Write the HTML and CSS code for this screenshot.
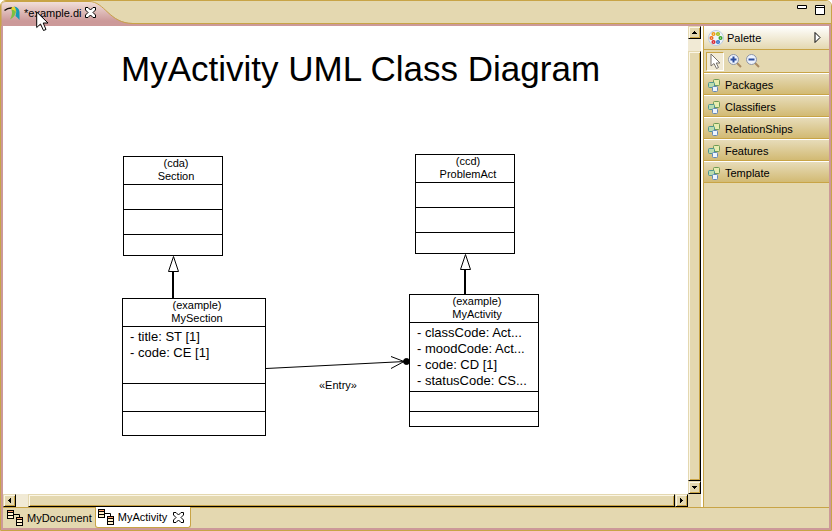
FILE: index.html
```html
<!DOCTYPE html>
<html lang="en">
<head>
<meta charset="utf-8">
<title>example.di</title>
<link rel="stylesheet" href="styles.css">
</head>
<body>
<svg class="defs" aria-hidden="true">
  <defs>
    <linearGradient id="tabfill" x1="0" y1="0" x2="0" y2="1"><stop offset="0" stop-color="#f3e2dc"/><stop offset=".8" stop-color="#cc9999"/></linearGradient>
    <symbol id="close" viewBox="0 0 11 11"><path d="M.5.5H3L5.500 3 8 .5h2.500V3L8 5.500l2.500 2.500v2.500H8L5.500 8 3 10.500H.5V8L3 5.500.5 3z" fill="#fff" stroke="#000"/></symbol>
    <symbol id="drawer" viewBox="0 0 12 13"><rect x="5.500" y=".5" width="6" height="6" rx="1" fill="#e8ecae" stroke="#6f9a55"/><rect x=".5" y="3.500" width="6" height="5" rx="1" fill="#b9dcae" stroke="#4f9590"/><rect x="4.500" y="7.500" width="5" height="5" rx="1" fill="#eef5ff" stroke="#6488b8"/></symbol>
    <symbol id="diagram" viewBox="0 0 16 16"><path d="M7 4.500h5.500V8" fill="none" stroke="#000"/><rect x=".5" y=".5" width="6" height="8" fill="#fff0cc" stroke="#000"/><path d="M1 1.500h5" stroke="#ffa070"/><path d="M1 2.500h5M1 5.500h5" stroke="#000"/><rect x="9.500" y="7.500" width="6" height="8" fill="#fff0cc" stroke="#000"/><path d="M10 8.500h5" stroke="#ffa070"/><path d="M10 9.500h5M10 12.500h5" stroke="#000"/></symbol>
  </defs>
</svg>
<div class="window">
  <header class="titlebar">
    <div class="editor-tab">
      <svg class="tab-shape" width="142" height="25" viewBox="0 0 142 25"><path d="M0 25V5Q0 0 5 0H88C104 0 108 22 132 22H142V25z" fill="url(#tabfill)"/><path d="M0 25V5Q0 .5 5 .5H88C104 .5 108 22.500 132 22.500H142" fill="none" stroke="#c8a446"/></svg>
      <svg class="tab-icon" width="16" height="14" viewBox="0 0 16 14"><path d="M.5 4.500Q4 1.500 8.500 2" fill="none" stroke="#16120c" stroke-width="1.500"/><path d="M8 1Q12 1 12 5Q12 10 6 13.500Q9 8 7.500 4z" fill="#7cc142"/><path d="M10 .5Q15 1 15.500 6V14Q14 12 11.500 10Q13.500 4 10 .5z" fill="#159bb5"/><path d="M7.500 2Q9 0 11 1.500Q12 4 11.500 6Q10 3 7.500 4z" fill="#e6d42e"/></svg>
      <span class="tab-title">*example.di</span>
      <button class="close" aria-label="Close editor"><svg width="11" height="11"><use href="#close"/></svg></button>
      <svg class="pointer" width="14" height="21" viewBox="0 0 14 21"><path d="M.7 1V16.500L4.500 13 7.500 19.500 10 18.500 7.200 12H12z" fill="#fff" stroke="#000"/></svg>
    </div>
    <div class="window-buttons">
      <button aria-label="Minimize"><svg width="10" height="10"><path d="M.5 .5h9v3h-9z" fill="#fff" stroke="#000"/></svg></button>
      <button aria-label="Maximize"><svg width="10" height="10"><path d="M.5 .5h9v9h-9zM.5 2.500h9" fill="#fff" stroke="#000"/></svg></button>
    </div>
  </header>
  <div class="frame">
    <main class="workspace">
      <section class="editor">
        <div class="canvas">
          <h1 class="diagram-title">MyActivity UML Class Diagram</h1>
          <svg class="edges" width="560" height="420" viewBox="0 0 560 420">
            <g transform="translate(-3 -26)" fill="none" stroke="#000">
              <path d="M173 271v27M465 269v25" stroke-width="2"/>
              <path d="M173.500 256.500L168.500 271.500H178.500zM465.500 254.500L460.500 269.500H470.500z" fill="#fff"/>
              <path d="M266 368.500L405 361.500M391 356.500L404 361.500L391 368.500"/>
              <circle cx="406.500" cy="361.500" r="3" fill="#000"/>
            </g>
          </svg>
          <span class="edge-label">«Entry»</span>
          <article class="node section">
            <h2>(cda)<br>Section</h2><div></div><div></div><div></div>
          </article>
          <article class="node problem-act">
            <h2>(ccd)<br>ProblemAct</h2><div></div><div></div><div></div>
          </article>
          <article class="node my-section">
            <h2>(example)<br>MySection</h2>
            <ul><li>- title: ST [1]</li><li>- code: CE [1]</li></ul><div></div><div></div>
          </article>
          <article class="node my-activity">
            <h2>(example)<br>MyActivity</h2>
            <ul><li>- classCode: Act...</li><li>- moodCode: Act...</li><li>- code: CD [1]</li><li>- statusCode: CS...</li></ul><div></div><div></div>
          </article>
        </div>
        <div class="scroll vertical">
          <button aria-label="Scroll up"><svg width="5" height="3"><path d="M2 0h1v1h1v1h1v1H0V2h1V1h1z"/></svg></button>
          <div class="thumb"></div>
          <button aria-label="Scroll down"><svg width="5" height="3"><path d="M0 0h5v1H4v1H3v1H2V2H1V1H0z"/></svg></button>
        </div>
        <div class="scroll horizontal">
          <button aria-label="Scroll left"><svg width="3" height="5"><path d="M3 0v5H2V4H1V3H0V2h1V1h1V0z"/></svg></button>
          <div class="thumb"></div>
          <button aria-label="Scroll right"><svg width="3" height="5"><path d="M0 0v5h1V4h1V3h1V2H2V1H1V0z"/></svg></button>
        </div>
      </section>
      <aside class="palette">
        <div class="palette-head">
          <svg width="16" height="16" viewBox="0 0 16 16"><circle cx="8" cy="8" r="7.500" fill="#eef4fb" stroke="#bccbe0"/><g fill="#fff" stroke-width="1.500"><circle cx="5.500" cy="4" r="1.300" stroke="#ef9a16"/><circle cx="10" cy="4" r="1.300" stroke="#a3bd19"/><circle cx="3.500" cy="8" r="1.300" stroke="#f06a1c"/><circle cx="12.500" cy="8" r="1.300" stroke="#38a32c"/><circle cx="5.500" cy="12" r="1.300" stroke="#d92b35"/><circle cx="10" cy="12" r="1.300" stroke="#3471c7"/></g></svg>
          <span>Palette</span>
          <button class="expand" aria-label="Pin palette"><svg width="7" height="11"><path d="M1 .5v10l5-5z" fill="#fff" stroke="#000"/></svg></button>
        </div>
        <div class="tools">
          <button class="selected" aria-label="Select"><svg width="11" height="16" viewBox="0 0 11 16"><path d="M1 1v12l3-2.500 2.500 5 2-1-2.300-4.500H10z" fill="#fff" stroke="#77716a"/></svg></button>
          <button aria-label="Zoom in"><svg width="14" height="14" viewBox="0 0 14 14"><path d="M9 9l4 4" stroke="#aa8a61" stroke-width="2"/><circle cx="5.500" cy="5.500" r="5" fill="#eef3fc" stroke="#8c94a6"/><path d="M5.500 2.500v6M2.500 5.500h6" stroke="#2c4e9e" stroke-width="2"/></svg></button>
          <button aria-label="Zoom out"><svg width="14" height="14" viewBox="0 0 14 14"><path d="M9 9l4 4" stroke="#aa8a61" stroke-width="2"/><circle cx="5.500" cy="5.500" r="5" fill="#eef3fc" stroke="#8c94a6"/><path d="M2.500 5.500h6" stroke="#2c4e9e" stroke-width="2"/></svg></button>
        </div>
        <button class="drawer"><svg width="12" height="13"><use href="#drawer"/></svg>Packages</button>
        <button class="drawer"><svg width="12" height="13"><use href="#drawer"/></svg>Classifiers</button>
        <button class="drawer"><svg width="12" height="13"><use href="#drawer"/></svg>RelationShips</button>
        <button class="drawer"><svg width="12" height="13"><use href="#drawer"/></svg>Features</button>
        <button class="drawer"><svg width="12" height="13"><use href="#drawer"/></svg>Template</button>
      </aside>
    </main>
    <nav class="page-tabs">
      <button class="page"><svg width="16" height="16"><use href="#diagram"/></svg>MyDocument</button>
      <div class="page active">
        <button><svg width="16" height="16"><use href="#diagram"/></svg>MyActivity</button>
        <button class="close" aria-label="Close page"><svg width="11" height="11"><use href="#close"/></svg></button>
      </div>
    </nav>
  </div>
</div>
</body>
</html>
```
FILE: styles.css
```css
:root {
  --sand: #e4d8b0;
  --sand-light: #f1ead5;
  --gold: #c8a446;
  --pink: #cc9999;
}

* { box-sizing: border-box; }

body {
  margin: 0;
  background: #fff;
  color: #000;
  font: 11px/14px "Liberation Sans", Arial, sans-serif;
}

button {
  display: flex;
  align-items: center;
  margin: 0;
  padding: 0;
  border: 0;
  background: none;
  color: inherit;
  font: inherit;
}

svg { display: block; flex: none; }
.defs { position: absolute; width: 0; height: 0; }

.window {
  display: flex;
  flex-direction: column;
  height: 100vh;
  border: 1px solid var(--gold);
  border-radius: 6px 6px 0 0;
  overflow: hidden;
}

.titlebar {
  display: flex;
  justify-content: space-between;
  flex: none;
  height: 25px;
  background: linear-gradient(var(--sand) 22px, var(--gold) 22px, var(--gold) 23px, var(--pink) 23px);
}

.editor-tab {
  position: relative;
  display: flex;
  align-items: center;
  gap: 4px;
  padding: 0 46px 2px 3px;
}

.tab-shape { position: absolute; left: 0; top: 0; }
.tab-icon, .tab-title, .editor-tab .close { position: relative; }
.pointer { position: absolute; left: 35px; top: 10px; z-index: 2; }

.window-buttons {
  display: flex;
  align-items: flex-start;
  gap: 8px;
  padding: 4px 6px;
}

.frame {
  display: flex;
  flex-direction: column;
  flex: 1;
  min-height: 0;
  border: 2px solid var(--pink);
  border-top: 0;
}

.workspace { display: flex; flex: 1; min-height: 0; }

.editor {
  display: grid;
  flex: 1;
  grid-template: 1fr 13px / 1fr 13px;
  min-width: 0;
  background: var(--sand);
}

.canvas { position: relative; overflow: hidden; background: #fff; }

.diagram-title {
  margin: 23px 0 0 118px;
  font-size: 35px;
  font-weight: 400;
  line-height: 40px;
  white-space: nowrap;
}

.edges { position: absolute; left: 0; top: 0; }
.edge-label { position: absolute; left: 316px; top: 352px; }

.node {
  position: absolute;
  display: grid;
  border: 1px solid #000;
  background: #fff;
}

.node h2 {
  margin: 0;
  padding-left: 6px;
  font-size: 11px;
  font-weight: 400;
  line-height: 13px;
  text-align: center;
}

.node h2 ~ * { border-top: 1px solid #000; }

.node ul {
  margin: 0;
  padding: 2px 7px;
  list-style: none;
  font-size: 13px;
  line-height: 16px;
  white-space: nowrap;
}

.section, .problem-act { width: 100px; grid-template-rows: 27px 25px 25px 21px; }
.section { left: 120px; top: 130px; }
.problem-act { left: 412px; top: 128px; }
.my-section { left: 119px; top: 272px; width: 144px; grid-template-rows: 27px 57px 28px 24px; }
.my-activity { left: 406px; top: 268px; width: 130px; grid-template-rows: 27px 69px 20px 15px; }

.scroll { display: flex; background: var(--sand-light); }
.vertical { flex-direction: column; }

.scroll button, .thumb {
  border: 1px solid;
  border-color: var(--sand) #000 #000 var(--sand);
  background: var(--sand);
  box-shadow: inset 1px 1px #fbf6e6, inset -1px -1px var(--gold);
}

.scroll button { flex: none; justify-content: center; width: 13px; height: 13px; }
.thumb { flex: 1; }
.vertical .thumb { margin-top: 12px; }
.horizontal .thumb { margin-left: 12px; }

.palette {
  flex: none;
  width: 128px;
  padding-left: 1px;
  border-left: 2px solid #fff;
  background: var(--sand);
  box-shadow: inset 1px 0 var(--gold);
}

.palette-head {
  display: flex;
  align-items: center;
  gap: 3px;
  height: 24px;
  padding: 0 8px 0 4px;
  border-bottom: 1px solid var(--gold);
  background: linear-gradient(#fff, var(--sand));
}

.expand { margin-left: auto; }

.tools {
  display: flex;
  align-items: center;
  gap: 4px;
  height: 23px;
  padding-left: 2px;
  border-bottom: 1px solid var(--gold);
}

.tools .selected {
  justify-content: center;
  width: 18px;
  height: 19px;
  border: 1px solid;
  border-color: var(--gold) #fff #fff var(--gold);
  background: var(--sand-light);
}

.drawer {
  gap: 5px;
  width: 100%;
  height: 22px;
  padding: 2px 0 0 4px;
  border-top: 1px solid #fff;
  border-bottom: 1px solid var(--gold);
  background: linear-gradient(#e7dcb9, #d2ba73);
}

.page-tabs {
  display: flex;
  flex: none;
  height: 21px;
  background: linear-gradient(var(--gold) 1px, var(--sand) 1px);
}

.page { display: flex; align-items: center; gap: 4px; padding: 0 3px 0 4px; }
.page button { gap: 4px; }

.active {
  gap: 6px;
  padding: 0 6px 0 2px;
  border: 1px solid var(--gold);
  border-top: 0;
  border-radius: 0 0 3px 3px;
  background: #fff;
}
```
